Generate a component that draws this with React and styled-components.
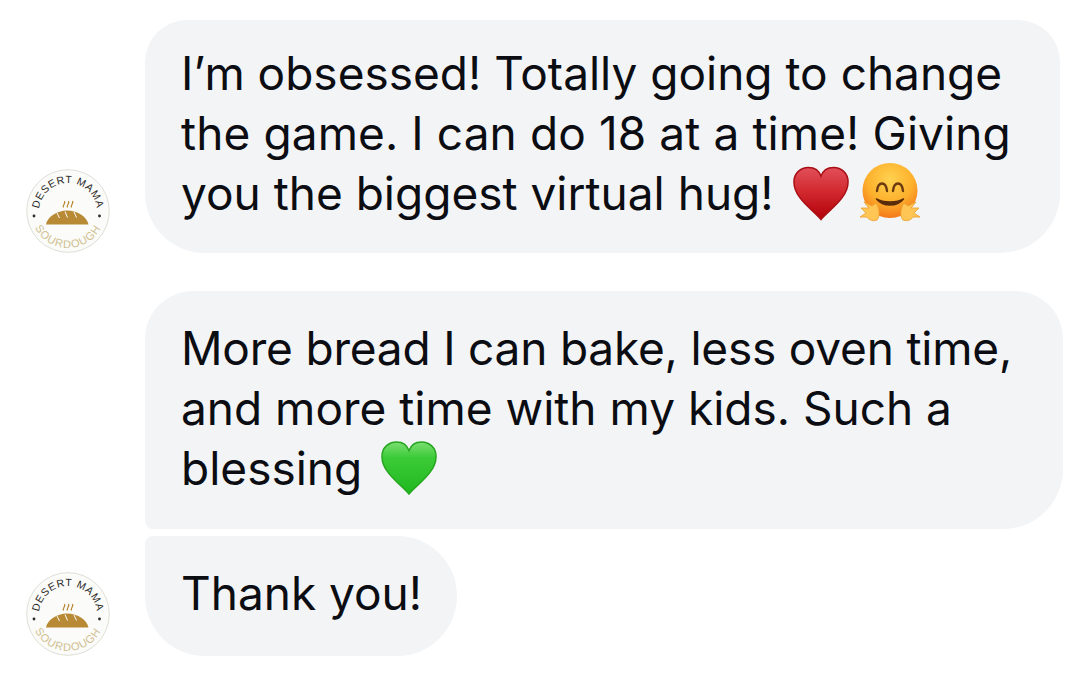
import React from "react";
import styled, { createGlobalStyle } from "styled-components";

const GlobalStyle = createGlobalStyle`
  html, body {
    margin: 0;
    background: #fff;
  }
`;

const Thread = styled.div`
  width: 1084px;
  height: 682px;
  box-sizing: border-box;
  padding: 20px 21px 0 26px;
  overflow: hidden;
  display: flex;
  flex-direction: column;
  font-family: Inter, "Liberation Sans", sans-serif;
  color: #0b0d12;
`;

const Row = styled.div`
  display: flex;
  align-items: flex-end;
  gap: 35px;
  margin-top: ${(p) => p.$gap || 0}px;
`;

const AvatarSlot = styled.div`
  flex: 0 0 84px;
  width: 84px;
  height: 84px;
`;

const Bubble = styled.div`
  box-sizing: border-box;
  width: ${(p) => p.$width}px;
  height: ${(p) => p.$height}px;
  padding: ${(p) => p.$top}px 0 0 36px;
  background: #f3f4f6;
  border-radius: ${(p) => p.$radius};
  font-size: 46px;
  line-height: 60px;
`;

const Line = styled.div`
  display: flex;
  align-items: center;
  white-space: nowrap;
  height: 60px;
  letter-spacing: ${(p) => p.$track || 0}px;
`;

const EmojiSvg = styled.svg`
  display: block;
  flex: none;
  margin-left: ${(p) => p.$left}px;
`;

const Logo = ({ id }) => (
  <svg width="84" height="84" viewBox="0 0 84 84">
    <defs>
      <path id={`${id}Top`} d="M 13 43 A 29 29 0 0 1 71 43" />
      <path id={`${id}Bottom`} d="M 5 42 A 37 37 0 0 0 79 42" />
    </defs>
    <circle cx="42" cy="42" r="41.3" fill="#fbfbf9" stroke="#dedfd6" strokeWidth="1" />
    <text fontFamily="Liberation Sans, sans-serif" fontSize="10.5" fill="#2b2a28" letterSpacing="0.7">
      <textPath href={`#${id}Top`} startOffset="50%" textAnchor="middle">DESERT MAMA</textPath>
    </text>
    <text fontFamily="Liberation Sans, sans-serif" fontSize="11" fill="#cfc08f" letterSpacing="1">
      <textPath href={`#${id}Bottom`} startOffset="50%" textAnchor="middle">SOURDOUGH</textPath>
    </text>
    <circle cx="8" cy="47" r="1.4" fill="#2b2a28" />
    <circle cx="73.5" cy="47" r="1.4" fill="#2b2a28" />
    <path d="M20 55.5 C 21 48 31 41.5 41 41.5 C 52 41.5 61 48 62.5 55.5 Z" fill="#b98a35" />
    <path d="M31 44 l2.5 5 M39 42.5 l2.5 6 M48 43 l2.5 5.5" stroke="#fbfbf9" strokeWidth="1" fill="none" />
    <path d="M37.5 38.5 c-1.5 -2.5 2.5 -3.5 1 -6.5 M41.5 38.5 c-1.5 -2.5 2.5 -3.5 1 -6.5 M45.5 38.5 c-1.5 -2.5 2.5 -3.5 1 -6.5" stroke="#b98a35" strokeWidth="1.3" fill="none" />
  </svg>
);

const HEART = "M30 55 C 22 45 2 33 2 16 C 2 7 9 1 17 1 C 23 1 28 4 30 10 C 32 4 37 1 43 1 C 51 1 58 7 58 16 C 58 33 38 45 30 55 Z";

const Heart = ({ id, width, height, left, stops, edge }) => (
  <EmojiSvg $left={left} width={width} height={height} viewBox="0 0 60 56">
    <defs>
      <linearGradient id={id} x1="0" y1="0" x2="0" y2="1">
        {stops.map(([o, c]) => (
          <stop key={o} offset={o} stopColor={c} />
        ))}
      </linearGradient>
    </defs>
    <path d={HEART} fill={`url(#${id})`} stroke={edge} strokeWidth="1.5" />
  </EmojiSvg>
);

const HugFace = () => (
  <EmojiSvg $left={10} width="60" height="60" viewBox="0 0 60 60">
    <defs>
      <radialGradient id="faceFill" cx="50%" cy="30%" r="70%">
        <stop offset="0" stopColor="#ffd24f" />
        <stop offset="0.6" stopColor="#fdb02c" />
        <stop offset="1" stopColor="#f4781a" />
      </radialGradient>
    </defs>
    <circle cx="30" cy="27.5" r="27.5" fill="url(#faceFill)" />
    <path d="M17 28 C 18 18 26 18 27 28 M33 28 C 34 18 42 18 43 28" stroke="#6b3a10" strokeWidth="2.4" fill="none" strokeLinecap="round" />
    <path d="M16.5 36 C 23 44 37 44 43.5 36 C 37 40 23 40 16.5 36 Z" stroke="#5a2c0b" strokeWidth="1.5" fill="#5a2c0b" strokeLinejoin="round" />
    <g fill="#ffc655" stroke="#ec9f2c" strokeWidth="0.8">
      <path d="M1 45 L9 45 L4 39 L12 43 L16 40 C 20 46 20 54 17 57 C 12 59 8 56 7 54 L0 54 L6 50 Z" />
      <path d="M59 45 L51 45 L56 39 L48 43 L44 40 C 40 46 40 54 43 57 C 48 59 52 56 53 54 L60 54 L54 50 Z" />
    </g>
  </EmojiSvg>
);

const App = () => (
  <Thread>
    <GlobalStyle />
    <Row>
      <AvatarSlot>
        <Logo id="logoOne" />
      </AvatarSlot>
      <Bubble $width={915} $height={233} $top={23} $radius="42px 42px 60px 60px / 42px 42px 60px 60px">
        <Line>I’m obsessed! Totally going to change</Line>
        <Line $track={0.1}>the game. I can do 18 at a time! Giving</Line>
        <Line>
          you the biggest virtual hug!
          <Heart id="redHeart" left={18} width={58} height={55} edge="#a80f14" stops={[[0, "#e2505a"], [0.45, "#d22a30"], [1, "#b10007"]]} />
          <HugFace />
        </Line>
      </Bubble>
    </Row>
    <Row $gap={38}>
      <AvatarSlot />
      <Bubble $width={918} $height={238} $top={27} $radius="48px 48px 60px 8px">
        <Line $track={-0.2}>More bread I can bake, less oven time,</Line>
        <Line>and more time with my kids. Such a</Line>
        <Line>
          blessing
          <Heart id="greenHeart" left={18} width={58} height={56} edge="#26a51f" stops={[[0, "#7cde72"], [0.3, "#3ccb38"], [1, "#1fb81f"]]} />
        </Line>
      </Bubble>
    </Row>
    <Row $gap={7}>
      <AvatarSlot>
        <Logo id="logoTwo" />
      </AvatarSlot>
      <Bubble $width={312} $height={120} $top={27} $radius="8px 60px 60px 60px">
        <Line>Thank you!</Line>
      </Bubble>
    </Row>
  </Thread>
);

export default App;
